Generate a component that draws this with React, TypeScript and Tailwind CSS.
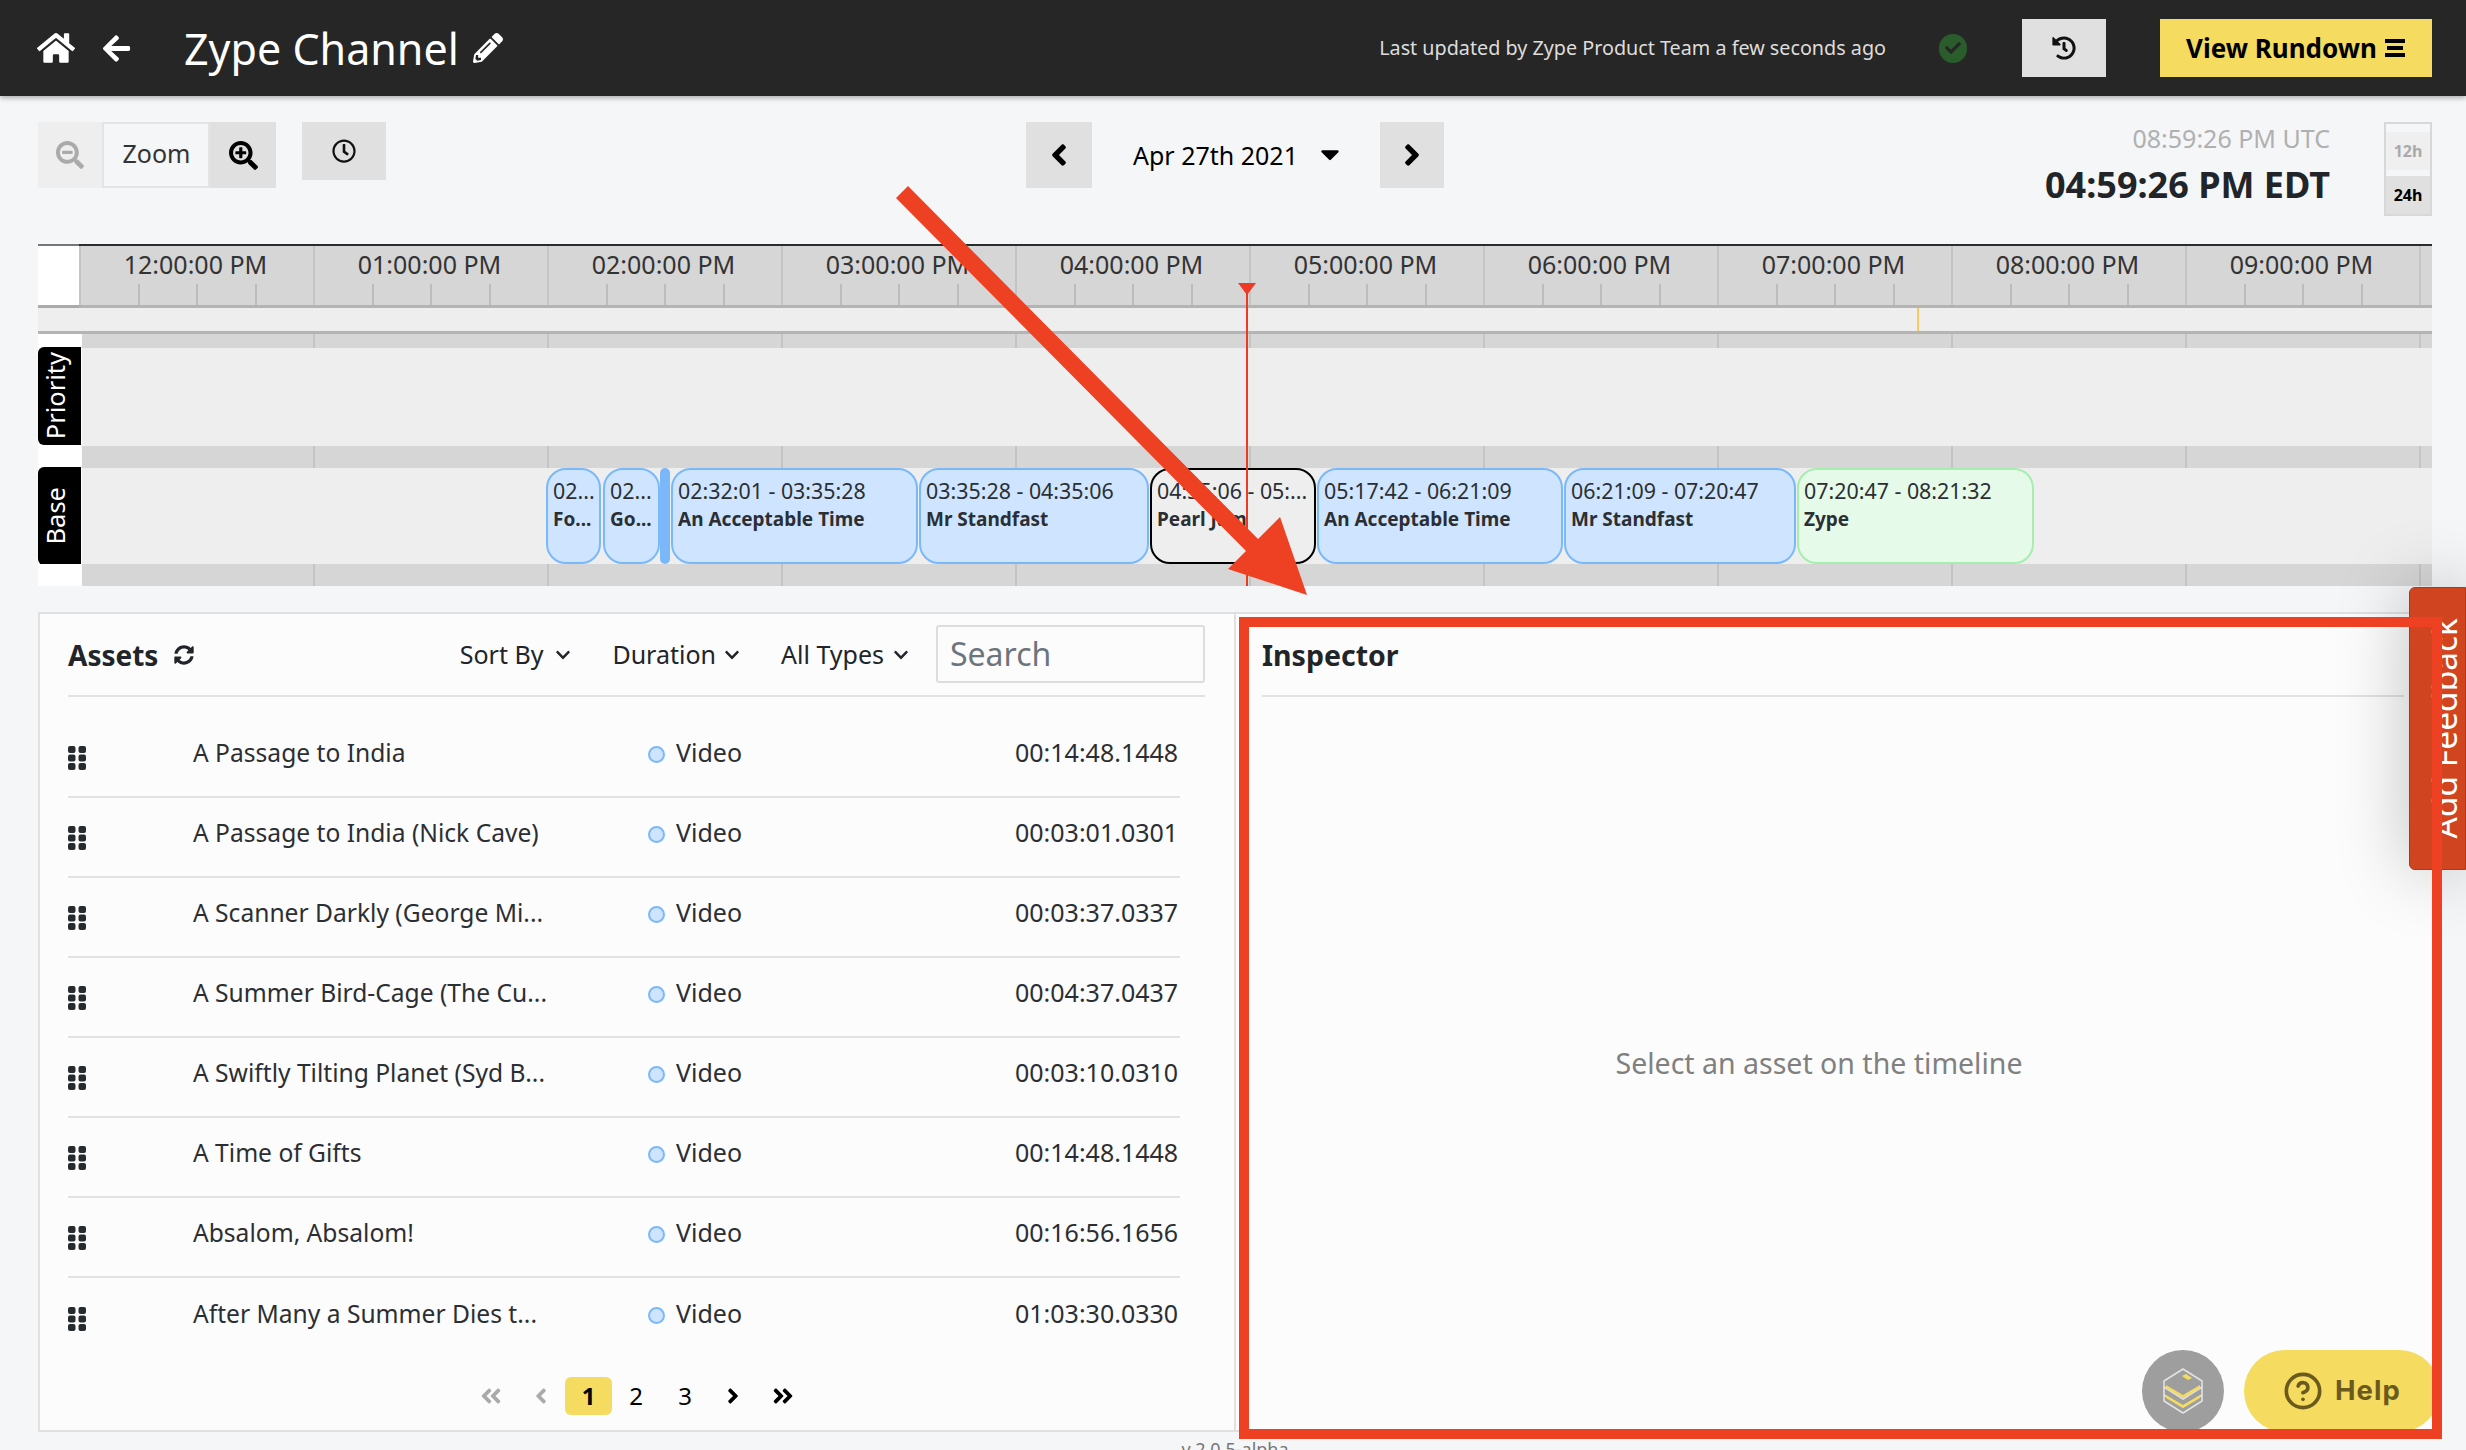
import {
  FaAngleDoubleLeft,
  FaAngleDoubleRight,
  FaAngleLeft,
  FaAngleRight,
  FaArrowLeft,
  FaCaretDown,
  FaCheck,
  FaChevronDown,
  FaHistory,
  FaHome,
  FaPencilAlt,
  FaRegClock,
  FaSearchMinus,
  FaSearchPlus,
  FaSyncAlt,
} from 'react-icons/fa';
import { CircleHelp } from 'lucide-react';

const hours = [
  '12:00:00 PM',
  '01:00:00 PM',
  '02:00:00 PM',
  '03:00:00 PM',
  '04:00:00 PM',
  '05:00:00 PM',
  '06:00:00 PM',
  '07:00:00 PM',
  '08:00:00 PM',
  '09:00:00 PM',
];

const assets = [
  { name: 'A Passage to India', duration: '00:14:48.1448' },
  { name: 'A Passage to India (Nick Cave)', duration: '00:03:01.0301' },
  { name: 'A Scanner Darkly (George Mi...', duration: '00:03:37.0337' },
  { name: 'A Summer Bird-Cage (The Cu...', duration: '00:04:37.0437' },
  { name: 'A Swiftly Tilting Planet (Syd B...', duration: '00:03:10.0310' },
  { name: 'A Time of Gifts', duration: '00:14:48.1448' },
  { name: 'Absalom, Absalom!', duration: '00:16:56.1656' },
  { name: 'After Many a Summer Dies t...', duration: '01:03:30.0330' },
];

const blue = 'bg-[#cfe5ff] border-[#7ab8fa]';

const blocks = [
  { time: '02...', title: 'Fo...', cls: `w-[55px] ml-[464px] ${blue}` },
  { time: '02...', title: 'Go...', cls: `w-[57px] ml-[2px] ${blue}` },
  { time: '', title: '', cls: 'w-[10px] bg-[#7ab8fa] border-[#7ab8fa] !rounded-[5px]' },
  { time: '02:32:01 - 03:35:28', title: 'An Acceptable Time', cls: `w-[247px] ml-[1px] ${blue}` },
  { time: '03:35:28 - 04:35:06', title: 'Mr Standfast', cls: `w-[230px] ml-[1px] ${blue}` },
  { time: '04:35:06 - 05:...', title: 'Pearl Jam', cls: 'w-[166px] ml-[1px] bg-[#eeeeee] border-black' },
  { time: '05:17:42 - 06:21:09', title: 'An Acceptable Time', cls: `w-[246px] ml-[1px] ${blue}` },
  { time: '06:21:09 - 07:20:47', title: 'Mr Standfast', cls: `w-[232px] ml-[1px] ${blue}` },
  { time: '07:20:47 - 08:21:32', title: 'Zype', cls: 'w-[237px] ml-[1px] bg-[#e6faea] border-[#a5efae]' },
];

function HourCell({ label }: { label: string }) {
  return (
    <div className="w-[234px] shrink-0 h-full flex flex-col border-l-2 border-[#c4c4c4]">
      <div className="h-[38px] pr-[3px] flex items-center justify-center text-[25px] text-[#333]">{label}</div>
      <div className="flex-1 flex">
        <div className="flex-1" />
        <div className="flex-1 border-l-2 border-[#bcbcbc]" />
        <div className="flex-1 border-l-2 border-[#bcbcbc]" />
        <div className="flex-1 border-l-2 border-[#bcbcbc]" />
      </div>
    </div>
  );
}

function GridSpacer({ height }: { height: string }) {
  return (
    <div className={`flex ${height}`}>
      <div className="w-[44px] shrink-0 bg-white" />
      <div className="flex-1 min-w-0 overflow-hidden flex bg-[#d6d6d6]">
        <div className="w-[231px] shrink-0" />
        {hours.map((h) => (
          <div key={h} className="w-[234px] shrink-0 border-l-2 border-[#c4c4c4]" />
        ))}
      </div>
    </div>
  );
}

function Grip() {
  return (
    <svg width="18" height="24" viewBox="0 0 18 24" fill="#262b30">
      <rect x="0" y="0" width="7.5" height="7" rx="2" />
      <rect x="10.5" y="0" width="7.5" height="7" rx="2" />
      <rect x="0" y="8.5" width="7.5" height="7" rx="2" />
      <rect x="10.5" y="8.5" width="7.5" height="7" rx="2" />
      <rect x="0" y="17" width="7.5" height="7" rx="2" />
      <rect x="10.5" y="17" width="7.5" height="7" rx="2" />
    </svg>
  );
}

function Dropdown({ label, className }: { label: string; className: string }) {
  return (
    <div className={`flex items-center text-[25px] text-[#212529] ${className}`}>
      {label}
    </div>
  );
}

export default function App() {
  return (
    <div className="relative w-[2466px] h-[1450px] overflow-hidden bg-[#f5f6f8] font-['Noto_Sans',sans-serif] text-[#2b2f33]">
      {/* top bar */}
      <header className="h-24 bg-[#262626] shadow-[0_2px_5px_rgba(0,0,0,0.3)] flex items-center text-white">
        <FaHome className="ml-[37px] text-[38px]" />
        <FaArrowLeft className="ml-[26px] text-[31px]" />
        <h1 className="ml-[52px] text-[43px] leading-none">Zype Channel</h1>
        <FaPencilAlt className="ml-[14px] text-[30px]" />
        <span className="ml-auto text-[19.75px] text-[#dddddd]">Last updated by Zype Product Team a few seconds ago</span>
        <div className="ml-[53px] w-[28px] h-[29px] rounded-full bg-[#2a5c2c] flex items-center justify-center">
          <FaCheck className="text-[16px] text-[#262626]" />
        </div>
        <button className="ml-[55px] w-[84px] h-[58px] bg-[#e0e0e0] flex items-center justify-center text-[#111]">
          <FaHistory className="text-[24px]" />
        </button>
        <button className="ml-[54px] mr-[34px] w-[272px] h-[58px] bg-[#f5db5f] flex items-center justify-center gap-[7px] text-[26px] font-bold text-black">
          View Rundown
          <svg width="22" height="20" viewBox="0 0 22 20" fill="black">
            <rect x="1" y="1" width="20" height="4" />
            <rect x="3" y="8" width="16" height="4" />
            <rect x="1" y="15" width="20" height="4" />
          </svg>
        </button>
      </header>

      {/* toolbar */}
      <div className="h-[148px] flex pl-[38px] pt-[26px] pr-[34px]">
        <div className="flex h-[66px]">
          <div className="w-[64px] bg-[#eeeeee] flex items-center justify-center text-[#aaaaaa]">
            <FaSearchMinus className="text-[28px]" />
          </div>
          <div className="w-[108px] pb-[2px] pl-[1px] bg-[#f5f6f8] border-2 border-[#e4e4e4] flex items-center justify-center text-[25px] text-[#333]">Zoom</div>
          <div className="w-[66px] bg-[#e0e0e0] flex items-center justify-center text-black">
            <FaSearchPlus className="text-[29px]" />
          </div>
        </div>
        <div className="ml-[26px] w-[84px] h-[58px] bg-[#e0e0e0] flex items-center justify-center text-[#111]">
          <FaRegClock className="text-[24px]" />
        </div>
        <div className="ml-[640px] flex h-[66px]">
          <div className="w-[66px] bg-[#e0e0e0] flex items-center justify-center text-black">
            <FaAngleLeft className="text-[34px]" />
          </div>
          <div className="w-[288px] flex items-center pl-[41px] pt-[2px] text-[25px] text-black">
            <span>Apr 27th 2021</span>
            <FaCaretDown className="ml-[17px] -mt-[4px] text-[30px]" />
          </div>
          <div className="w-[64px] bg-[#e0e0e0] flex items-center justify-center text-black">
            <FaAngleRight className="text-[34px]" />
          </div>
        </div>
        <div className="ml-auto flex">
          <div className="flex flex-col items-end mr-[54px] -mt-[1px]">
            <span className="text-[25px] leading-[34px] text-[#b0b0b0]">08:59:26 PM UTC</span>
            <span className="mt-[7px] text-[36px] leading-[46px] font-bold text-[#212529]">04:59:26 PM EDT</span>
          </div>
          <div className="w-[48px] h-[94px] border-2 border-[#d8d8d8] flex flex-col text-[16px] font-bold">
            <div className="mt-[8px] h-[38px] bg-[#efefef] text-[#aaaaaa] flex items-center justify-center">12h</div>
            <div className="mt-[6px] h-[38px] bg-[#e0e0e0] text-black flex items-center justify-center">24h</div>
          </div>
        </div>
      </div>

      {/* timeline */}
      <div className="ml-[38px] w-[2394px] flex flex-col">
        <div className="flex h-[64px]">
          <div className="w-[41px] shrink-0 bg-white border-t-2 border-b-[3px] border-[#aaaaaa] border-t-[#777]" />
          <div className="flex-1 min-w-0 flex bg-[#d6d6d6] border-t-2 border-t-[#2a2d30] border-b-[3px] border-b-[#b4b4b4] overflow-hidden">
            {hours.map((h) => (
              <HourCell key={h} label={h} />
            ))}
            <div className="w-[13px] shrink-0 border-l-2 border-[#c4c4c4]" />
          </div>
        </div>
        <div className="h-[26px] bg-[#eeeeee] border-b-[3px] border-[#b4b4b4] flex">
          <div className="ml-[1879px] w-[2px] bg-[#fbc860]" />
        </div>
        <GridSpacer height="h-[14px]" />
        <div className="flex h-[98px]">
          <div className="w-[44px] shrink-0 bg-white">
            <div className="w-[43px] h-[98px] -mt-px bg-black text-white rounded-l-[6px] flex items-center justify-center pr-[9px] text-[25.5px]">
              <span className="[writing-mode:vertical-rl] rotate-180">Priority</span>
            </div>
          </div>
          <div className="flex-1 bg-[#eeeeee]" />
        </div>
        <GridSpacer height="h-[22px]" />
        <div className="flex h-[96px]">
          <div className="w-[44px] shrink-0 bg-white">
            <div className="w-[43px] h-[98px] -mt-px bg-black text-white rounded-l-[6px] flex items-center justify-center pr-[9px] text-[25.5px]">
              <span className="[writing-mode:vertical-rl] rotate-180">Base</span>
            </div>
          </div>
          <div className="flex-1 min-w-0 flex bg-[#eeeeee]">
            {blocks.map((b, i) => (
              <div key={i} className={`h-full shrink-0 border-2 rounded-[20px] overflow-hidden pl-[5px] pt-[7px] text-[#2b2f33] whitespace-nowrap ${b.cls}`}>
                <div className="leading-[28px] text-[21.4px]">{b.time}</div>
                <div className="leading-[28px] text-[19px] font-bold">{b.title}</div>
              </div>
            ))}
          </div>
        </div>
        <GridSpacer height="h-[22px]" />
      </div>

      {/* assets + inspector */}
      <div className="mt-[26px] ml-[38px] w-[2394px] h-[820px] flex bg-[#fcfcfc] border-2 border-[#e0e0e0] border-r-0">
        <section className="w-[1196px] border-r-2 border-[#e0e0e0] flex flex-col pl-[28px]">
          <div className="h-[83px] w-[1137px] border-b-2 border-[#e2e2e2] flex items-center">
            <span className="text-[28px] font-bold text-[#212529]">Assets</span>
            <FaSyncAlt className="ml-[16px] text-[20px] text-[#212529]" />
            <Dropdown label="Sort By" className="ml-[auto]" />
            <FaChevronDown className="ml-[12px] text-[16px] text-[#212529]" />
            <Dropdown label="Duration" className="ml-[41px]" />
            <FaChevronDown className="ml-[8px] text-[16px] text-[#212529]" />
            <Dropdown label="All Types" className="ml-[41px]" />
            <FaChevronDown className="ml-[9px] text-[16px] text-[#212529]" />
            <div className="ml-[27px] w-[269px] h-[58px] -mt-[2px] border-2 border-[#dddddd] rounded-[3px] bg-[#fcfcfc] flex items-center pl-[12px] text-[32px] text-[#6c757d]">
              Search
            </div>
          </div>
          <ul className="mt-[21px] w-[1112px]">
            {assets.map((a, i) => (
              <li key={i} className={`h-[80px] flex items-center pb-[8px] text-[25px] ${i < assets.length - 1 ? 'border-b-2 border-[#e2e2e2]' : ''}`}>
                <div className="w-[125px] pt-[10px]">
                  <Grip />
                </div>
                <span className="w-[455px] whitespace-nowrap text-[24.6px] text-[#2b2f33]">{a.name}</span>
                <span className="w-[17px] h-[17px] rounded-full bg-[#cfe5ff] border-2 border-[#7ab8fa] mt-[2px]" />
                <span className="ml-[11px] w-[339px]">Video</span>
                <span>{a.duration}</span>
              </li>
            ))}
          </ul>
          <div className="mt-[19px] ml-[411px] flex items-center h-[38px] text-[24px] text-black">
            <FaAngleDoubleLeft className="text-[24px] text-[#aaaaaa]" />
            <FaAngleLeft className="ml-[26px] text-[24px] text-[#aaaaaa]" />
            <div className="ml-[12px] w-[47px] h-[38px] rounded-[6px] bg-[#f5db5f] flex items-center justify-center font-bold">1</div>
            <div className="w-[48px] text-center">2</div>
            <div className="w-[50px] text-center">3</div>
            <FaAngleRight className="ml-[11px] text-[24px]" />
            <FaAngleDoubleRight className="ml-[26px] text-[24px]" />
          </div>
        </section>
        <section className="flex-1 flex flex-col pl-[26px] pr-[28px]">
          <div className="h-[83px] pt-[2px] border-b-2 border-[#e2e2e2] flex items-center">
            <span className="text-[28.5px] font-bold text-[#212529]">Inspector</span>
          </div>
          <div className="flex-1 flex items-center justify-center pr-[28px] text-[28.5px] text-[#808080]">
            Select an asset on the timeline
          </div>
        </section>
      </div>

      <div className="text-center text-[18px] leading-[24px] text-[#777] mt-[5px] w-[2470px]">v 2.0.5-alpha</div>

      {/* playhead */}
      <div className="absolute left-[1238px] top-[283px] w-0 h-0 border-x-[9px] border-x-transparent border-t-[12px] border-t-[#ee3a24]" />
      <div className="absolute left-[1246px] top-[290px] w-[2px] h-[296px] bg-[#ee3a24]" />

      {/* feedback tab */}
      <div className="absolute right-0 top-[587px] w-[57px] h-[283px] bg-[#d04520] border border-[#a83a1d] rounded-l-[6px] shadow-[0_0_70px_rgba(0,0,0,0.25)] flex items-center justify-end pr-[4px] text-[33.5px] leading-none text-white overflow-hidden">
        <span className="[writing-mode:vertical-rl] rotate-180 whitespace-nowrap leading-none">Add Feedback</span>
      </div>

      {/* chat widgets */}
      <div className="absolute left-[2142px] top-[1350px] w-[82px] h-[82px] rounded-full bg-[#9e9e9e] flex items-center justify-center">
        <svg width="44" height="48" viewBox="0 0 44 48" fill="none" stroke="#e2e2e2" strokeWidth="1.6" strokeLinejoin="round">
          <path d="M22 2 41 14v6L22 32 3 20v-6z" />
          <path d="M3 20v8l19 12 19-12v-8" />
          <path d="M3 28v6l19 12 19-12v-6" />
          <path d="M5 21l17 10 17-10v-3L22 28 5 18z" fill="#f5db5f" stroke="none" />
          <path d="M5 31l17 10 17-10v-3L22 38 5 28z" fill="#f5db5f" stroke="none" />
          <path d="M21 9l4-2 6 4-4 2z" fill="#f5db5f" stroke="none" />
        </svg>
      </div>
      <div className="absolute left-[2244px] top-[1350px] w-[196px] h-[82px] rounded-full bg-[#f5db5f] flex items-center pl-[39px] text-[#6b5a1e]">
        <CircleHelp size={40} strokeWidth={2.2} />
        <span className="ml-[12px] text-[27.5px] font-bold tracking-[1px] font-['Inter',sans-serif]">Help</span>
      </div>

      {/* annotation */}
      <svg className="absolute left-0 top-0 pointer-events-none" width="2466" height="1450">
        <polygon points="896,198 908,186 1258,539 1280,517 1307,595 1228,569 1246,551" fill="#ee4023" />
      </svg>
      <div className="absolute left-[1239px] top-[617px] w-[1203px] h-[822px] border-[10px] border-[#ee4023] pointer-events-none" />
    </div>
  );
}
